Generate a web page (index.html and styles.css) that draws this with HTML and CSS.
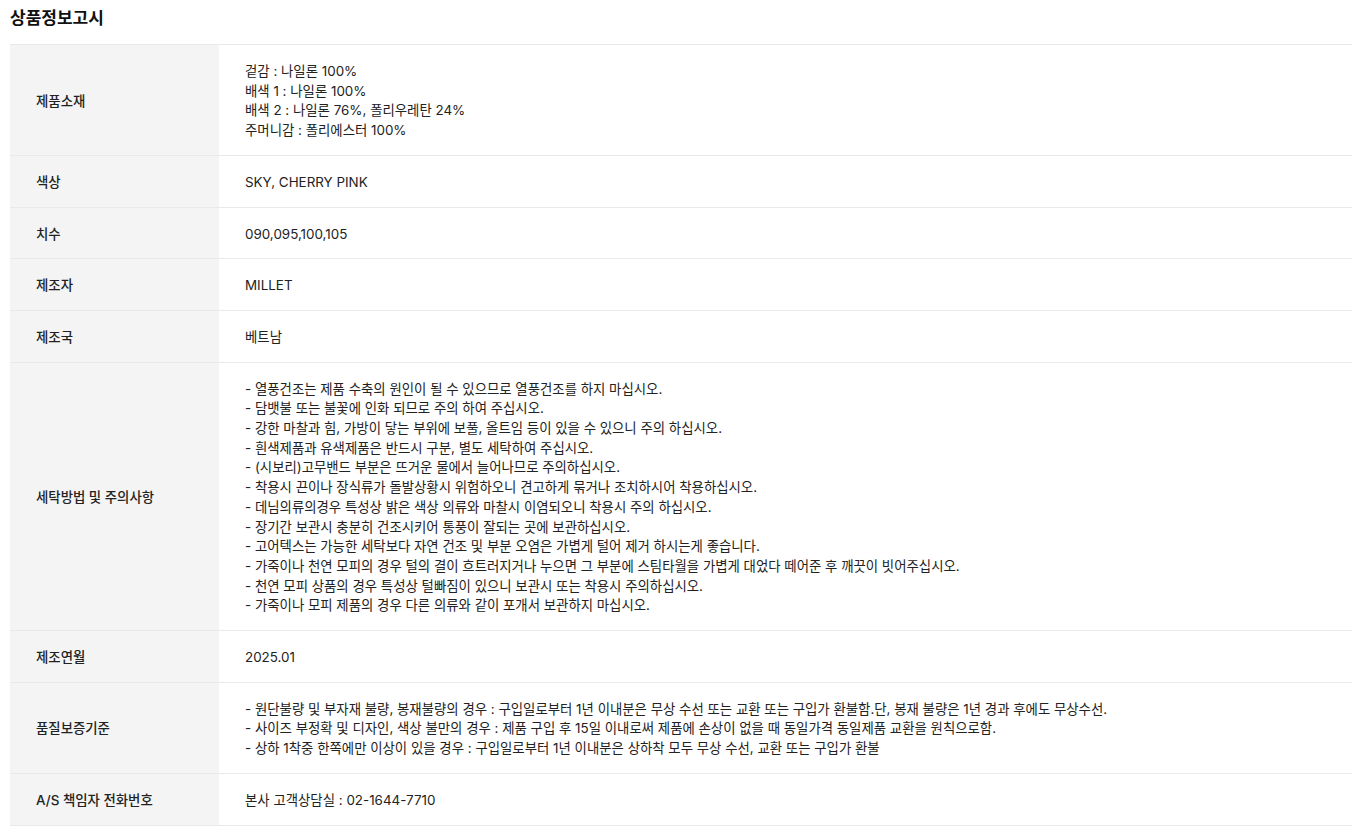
FILE: index.html
```html
<!DOCTYPE html>
<html lang="ko">
<head>
  <meta charset="UTF-8" />
  <meta name="viewport" content="width=device-width, initial-scale=1" />
  <title>상품정보고시</title>
  <link rel="stylesheet" href="styles.css">
</head>
<body>
  <div class="notice">
    <h2>상품정보고시</h2>
    <table>
      <tbody>
        <tr>
          <th>제품소재</th>
          <td>겉감 : 나일론 100%<br>배색 1 : 나일론 100%<br>배색 2 : 나일론 76%, 폴리우레탄 24%<br>주머니감 : 폴리에스터 100%</td>
        </tr>
        <tr>
          <th>색상</th>
          <td>SKY, CHERRY PINK</td>
        </tr>
        <tr>
          <th>치수</th>
          <td>090,095,100,105</td>
        </tr>
        <tr>
          <th>제조자</th>
          <td>MILLET</td>
        </tr>
        <tr>
          <th>제조국</th>
          <td>베트남</td>
        </tr>
        <tr>
          <th>세탁방법 및 주의사항</th>
          <td>
            - 열풍건조는 제품 수축의 원인이 될 수 있으므로 열풍건조를 하지 마십시오.<br>
            - 담뱃불 또는 불꽃에 인화 되므로 주의 하여 주십시오.<br>
            - 강한 마찰과 힘, 가방이 닿는 부위에 보풀, 올트임 등이 있을 수 있으니 주의 하십시오.<br>
            - 흰색제품과 유색제품은 반드시 구분, 별도 세탁하여 주십시오.<br>
            - (시보리)고무밴드 부분은 뜨거운 물에서 늘어나므로 주의하십시오.<br>
            - 착용시 끈이나 장식류가 돌발상황시 위험하오니 견고하게 묶거나 조치하시어 착용하십시오.<br>
            - 데님의류의경우 특성상 밝은 색상 의류와 마찰시 이염되오니 착용시 주의 하십시오.<br>
            - 장기간 보관시 충분히 건조시키어 통풍이 잘되는 곳에 보관하십시오.<br>
            - 고어텍스는 가능한 세탁보다 자연 건조 및 부분 오염은 가볍게 털어 제거 하시는게 좋습니다.<br>
            - 가죽이나 천연 모피의 경우 털의 결이 흐트러지거나 누으면 그 부분에 스팀타월을 가볍게 대었다 떼어준 후 깨끗이 빗어주십시오.<br>
            - 천연 모피 상품의 경우 특성상 털빠짐이 있으니 보관시 또는 착용시 주의하십시오.<br>
            - 가죽이나 모피 제품의 경우 다른 의류와 같이 포개서 보관하지 마십시오.
          </td>
        </tr>
        <tr>
          <th>제조연월</th>
          <td>2025.01</td>
        </tr>
        <tr>
          <th>품질보증기준</th>
          <td>
            - 원단불량 및 부자재 불량, 봉재불량의 경우 : 구입일로부터 1년 이내분은 무상 수선 또는 교환 또는 구입가 환불함.단, 봉재 불량은 1년 경과 후에도 무상수선.<br>
            - 사이즈 부정확 및 디자인, 색상 불만의 경우 : 제품 구입 후 15일 이내로써 제품에 손상이 없을 때 동일가격 동일제품 교환을 원칙으로함.<br>
            - 상하 1착중 한쪽에만 이상이 있을 경우 : 구입일로부터 1년 이내분은 상하착 모두 무상 수선, 교환 또는 구입가 환불
          </td>
        </tr>
        <tr>
          <th>A/S 책임자 전화번호</th>
          <td>본사 고객상담실 : 02-1644-7710</td>
        </tr>
      </tbody>
    </table>
  </div>
</body>
</html>
```

FILE: styles.css
```css
body {
  margin: 0;
  font-family: Inter, "Noto Sans CJK KR", sans-serif;
  color: #222;
  background: #fff;
}
.notice {
  padding: 0 13px 0 10px;
}
h2 {
  margin: 0;
  height: 44px;
  line-height: 36px;
  font-size: 17px;
  font-weight: 700;
  color: #111;
}
table {
  width: 100%;
  border-collapse: collapse;
  border-top: 1px solid #e9e9e9;
}
th, td {
  border-bottom: 1px solid #e9e9e9;
  padding: 17px 26px 14px;
  font-size: 13.4px;
  line-height: 19.7px;
  text-align: left;
  vertical-align: middle;
}
th {
  width: 157px;
  background-color: #f4f4f4;
  font-weight: 500;
  color: #222;
}
td {
  color: #222;
}
```
